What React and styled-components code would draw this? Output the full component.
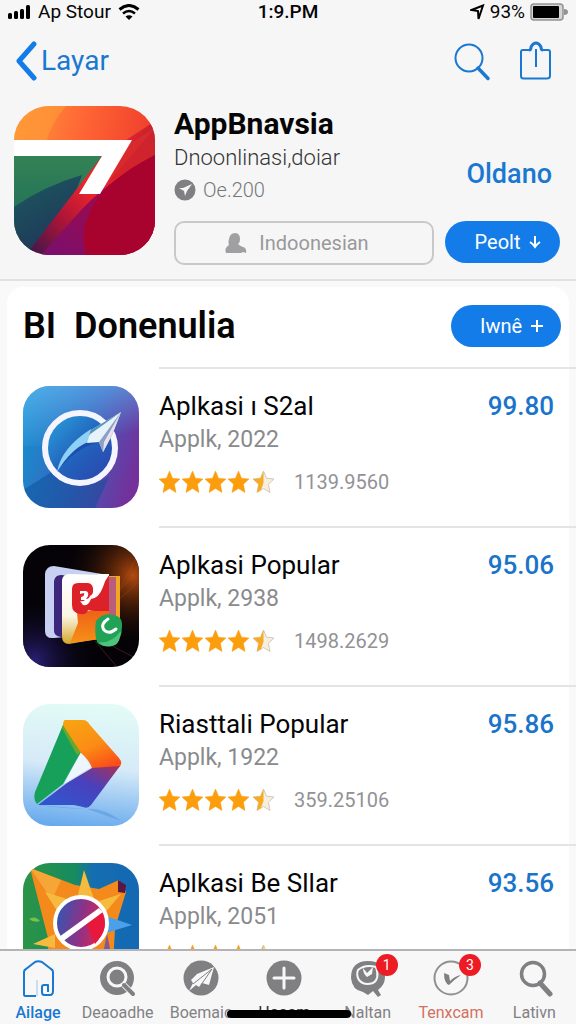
import React from 'react';
import styled, { createGlobalStyle } from 'styled-components';

const GlobalStyle = createGlobalStyle`
  * {
    box-sizing: border-box;
  }

  body {
    margin: 0;
    background: #f6f6f7;
    font-family: Roboto, "Liberation Sans", sans-serif;
    color: #050505;
  }

  button {
    font-family: inherit;
    border: none;
    padding: 0;
    background: none;
    cursor: pointer;
  }

  h1, h2, h3, p, ul {
    margin: 0;
    padding: 0;
  }

  svg {
    display: block;
    flex: none;
  }
`;

const Screen = styled.div`
  height: 100vh;
  display: flex;
  flex-direction: column;
  overflow: hidden;
`;

const StatusBar = styled.div`
  display: grid;
  grid-template-columns: 1fr auto 1fr;
  align-items: center;
  height: 24px;
  padding: 0 8px;
  font-size: 19px;
  line-height: 24px;
`;

const StatusGroup = styled.div`
  display: flex;
  align-items: center;
  justify-content: ${props => (props.$end ? 'flex-end' : 'flex-start')};
  gap: ${props => (props.$end ? '5px' : '7px')};
`;

const Clock = styled.span`
  font-weight: 500;
`;

const NavBar = styled.nav`
  display: flex;
  align-items: center;
  justify-content: space-between;
  height: 76px;
  padding: 0 23px 2px 15px;
`;

const BackLink = styled.a`
  display: flex;
  align-items: center;
  gap: 4px;
  font-size: 28px;
  line-height: 36px;
  color: #1a78d2;
  text-decoration: none;
`;

const NavActions = styled.div`
  display: flex;
  align-items: center;
  gap: 28px;
`;

const IconButton = styled.button`
  display: flex;
`;

const AppHeader = styled.header`
  display: flex;
  align-items: flex-start;
  gap: 19px;
  padding: 6px 16px 14px 14px;
  border-bottom: 2px solid #e1e1e2;
`;

const AppInfo = styled.div`
  flex: 1;
  display: flex;
  flex-direction: column;
  gap: 15px;
`;

const InfoTop = styled.div`
  display: flex;
  align-items: flex-end;
  justify-content: space-between;
`;

const AppTitle = styled.h1`
  font-size: 30px;
  line-height: 36px;
  font-weight: 700;
`;

const AppSubtitle = styled.p`
  font-size: 22px;
  line-height: 32px;
  font-weight: 300;
  color: #333;
`;

const AppMeta = styled.p`
  display: flex;
  align-items: center;
  gap: 7px;
  font-size: 20px;
  line-height: 32px;
  font-weight: 300;
  color: #77777a;
`;

const PriceLink = styled.a`
  padding: 0 8px 14px 0;
  font-size: 27px;
  line-height: 36px;
  font-weight: 500;
  color: #1a78d2;
  text-decoration: none;
`;

const InfoActions = styled.div`
  display: flex;
  gap: 11px;
`;

const OutlineButton = styled.button`
  flex: 1;
  display: flex;
  align-items: center;
  justify-content: center;
  gap: 12px;
  height: 44px;
  border: 2px solid #c9c9ca;
  border-radius: 10px;
  padding-right: 14px;
  font-size: 20px;
  color: #99999b;
`;

const PillButton = styled.button`
  display: flex;
  align-items: center;
  justify-content: center;
  gap: 8px;
  width: ${props => (props.$small ? '110px' : '115px')};
  height: 42px;
  padding-left: 12px;
  border-radius: 21px;
  background: #147ce8;
  color: #fff;
  font-size: 20px;
`;

const Content = styled.main`
  flex: 1;
  min-height: 0;
  overflow: hidden;
  padding: 6px 0 0 7px;
  background: #f9f9fa;
`;

const ListHeader = styled.div`
  display: flex;
  align-items: center;
  justify-content: space-between;
  height: 80px;
  margin-right: 7px;
  padding: 0 8px 2px 16px;
  border-radius: 16px 16px 0 0;
  background: #fff;
`;

const ListTitle = styled.h2`
  font-size: 36px;
  line-height: 42px;
  font-weight: 600;
  white-space: pre;
`;

const AppList = styled.ul`
  list-style: none;
  background: linear-gradient(to left, #f9f9fa 7px, #fff 7px);
`;

const AppRow = styled.li`
  display: flex;
  gap: 20px;
  padding-left: 16px;
`;

const IconCell = styled.div`
  padding-top: 19px;
`;

const RowBody = styled.div`
  flex: 1;
  height: 159px;
  padding: 22px 22px 0 0;
  border-top: 2px solid #e4e4e6;
`;

const RowTop = styled.div`
  display: flex;
  justify-content: space-between;
`;

const RowTitle = styled.h3`
  font-size: 26px;
  line-height: 30px;
  font-weight: 400;
`;

const RowPrice = styled.a`
  font-size: 26px;
  line-height: 30px;
  font-weight: 500;
  color: #1a74ca;
  text-decoration: none;
`;

const RowSubtitle = styled.p`
  margin-top: 4px;
  font-size: 23px;
  line-height: 30px;
  color: #8a8a8d;
`;

const Rating = styled.div`
  display: flex;
  align-items: center;
  gap: 20px;
  margin-top: 13px;
  font-size: 20px;
  line-height: 28px;
  color: #929295;
`;

const TabBar = styled.nav`
  position: relative;
  display: grid;
  grid-template-columns: 76px repeat(6, 1fr);
  height: 75px;
  border-top: 2px solid #b4b4b6;
  background: #f7f7f8;
`;

const Tab = styled.button`
  display: flex;
  flex-direction: column;
  align-items: center;
  padding-top: 9px;
  gap: 5px;
  font-size: 16px;
  line-height: 20px;
  font-weight: ${props => (props.$active ? 500 : 400)};
  color: ${props => props.$color || '#818183'};
`;

const TabIcon = styled.span`
  position: relative;
`;

const Badge = styled.span`
  position: absolute;
  top: -6px;
  right: -11px;
  width: 22px;
  height: 22px;
  border-radius: 50%;
  background: #ed1c24;
  color: #fff;
  font-size: 14px;
  line-height: 22px;
  text-align: center;
`;

const HomeIndicator = styled.div`
  position: absolute;
  left: 50%;
  bottom: 6px;
  width: 124px;
  height: 8px;
  margin-left: -61px;
  border-radius: 4px;
  background: #000;
`;

const STAR = 'M10.500 0l3 7.200 7.500.8-5.600 5.200L17 21.500l-6.500-4-6.500 4 1.600-8.300L0 8l7.500-.8z';

function Stars() {
  return (
    <svg width="115" height="22" viewBox="0 0 115 22" role="img" aria-label="4.5">
      {[0, 1, 2, 3].map(i => (
        <path key={i} d={STAR} fill="#fb9d0c" stroke="#fb9d0c" strokeWidth="0.5" strokeLinejoin="round" transform={`translate(${i * 23} 0)`} />
      ))}
      <g transform="translate(94 0)">
        <path d={STAR} fill="#f6efe0" stroke="#d5c9b4" strokeWidth="1" />
        <path d="M10.500 0v12L8 19l-4 2.500 1.600-8.300L0 8l7.500-.8z" fill="#f6ab25" />
      </g>
    </svg>
  );
}

function SevenIcon() {
  return (
    <svg width="141" height="149" viewBox="0 0 141 149" aria-hidden="true">
      <defs>
        <clipPath id="sevenClip"><rect width="141" height="149" rx="35" /></clipPath>
        <linearGradient id="sevenTop" x1="0" y1="0" x2="1" y2="0.2">
          <stop offset="0" stopColor="#ff9a3c" />
          <stop offset="0.5" stopColor="#ff6534" />
          <stop offset="1" stopColor="#ee3d2c" />
        </linearGradient>
        <linearGradient id="sevenGreen" x1="0" y1="0" x2="0" y2="1">
          <stop offset="0" stopColor="#348355" />
          <stop offset="1" stopColor="#17675a" />
        </linearGradient>
        <linearGradient id="sevenBlue" x1="0" y1="0" x2="0.5" y2="1">
          <stop offset="0" stopColor="#1b5b60" />
          <stop offset="1" stopColor="#203558" />
        </linearGradient>
        <linearGradient id="sevenRed" x1="1" y1="0" x2="0" y2="1">
          <stop offset="0" stopColor="#cf2330" />
          <stop offset="0.5" stopColor="#ee242c" />
          <stop offset="0.75" stopColor="#a31439" />
          <stop offset="1" stopColor="#35174e" />
        </linearGradient>
        <linearGradient id="sevenPurple" x1="1" y1="0" x2="0" y2="1">
          <stop offset="0" stopColor="#ba0534" />
          <stop offset="1" stopColor="#77106f" />
        </linearGradient>
      </defs>
      <g clipPath="url(#sevenClip)">
        <rect width="141" height="149" fill="url(#sevenTop)" />
        <path d="M0 0h52Q39 14 32 36H0z" fill="#ff9836" opacity="0.7" />
        <path d="M0 48h92L62 98 15 149H0z" fill="url(#sevenGreen)" />
        <path d="M0 101Q30 80 68 69L54 108 15 149H0z" fill="url(#sevenBlue)" />
        <path d="M141 15 88 50 12 149h129z" fill="url(#sevenRed)" />
        <path d="M141 22 86 86l22-44z" fill="#ff3b31" opacity="0.55" />
        <path d="M118 35 141 15v34L92 78z" fill="#c4232c" opacity="0.5" />
        <path d="M141 49Q91 76 61 111L27 149h114z" fill="url(#sevenPurple)" />
        <path d="M141 49Q91 74 77 104 65 126 72 149h69z" fill="#a8032f" />
        <path d="M0 34h118L86 88H65L88 50H0z" fill="#fff" />
      </g>
    </svg>
  );
}

function PlaneIcon() {
  return (
    <svg width="116" height="122" viewBox="0 0 116 122" aria-hidden="true">
      <defs>
        <clipPath id="planeClip"><rect width="116" height="122" rx="27" /></clipPath>
        <linearGradient id="planeBg" x1="0" y1="0.3" x2="1" y2="0.6">
          <stop offset="0" stopColor="#168fcf" />
          <stop offset="0.5" stopColor="#3a63bd" />
          <stop offset="1" stopColor="#74309b" />
        </linearGradient>
        <linearGradient id="planeTop" x1="0" y1="0" x2="0.4" y2="1">
          <stop offset="0" stopColor="#62b2ee" stopOpacity="0.8" />
          <stop offset="1" stopColor="#62b2ee" stopOpacity="0" />
        </linearGradient>
        <linearGradient id="planeDisc" x1="0" y1="0" x2="1" y2="1">
          <stop offset="0" stopColor="#2ca6e0" />
          <stop offset="0.5" stopColor="#2164bd" />
          <stop offset="1" stopColor="#2c41aa" />
        </linearGradient>
      </defs>
      <g clipPath="url(#planeClip)">
        <rect width="116" height="122" fill="url(#planeBg)" />
        <rect width="116" height="60" fill="url(#planeTop)" />
        <path d="M0 104 32 84q25 22 54 7l-14 31H0z" fill="#0c4e97" opacity="0.5" />
        <circle cx="57" cy="62" r="35" fill="url(#planeDisc)" stroke="#f4f5ff" strokeWidth="6" />
        <path d="M34 86Q38 62 68 43l-3 14Q49 65 34 86z" fill="#8ed1f5" />
        <path d="M34 86Q48 63 65 56l9 1Q52 62 34 86z" fill="#1d4dac" />
        <path d="M98 26 68 44l-4 13 12-1 4 10 9-17z" fill="#e8f2fa" />
        <path d="M98 26 76 56l4 10 9-17z" fill="#8c9fc4" />
        <path d="M98 26 68 44l-2 5z" fill="#5295bd" />
        <path d="m98 26-17 30-1 10 9-17z" fill="#e9dfee" />
      </g>
    </svg>
  );
}

function BooksIcon() {
  return (
    <svg width="116" height="122" viewBox="0 0 116 122" aria-hidden="true">
      <defs>
        <clipPath id="booksClip"><rect width="116" height="122" rx="27" /></clipPath>
        <radialGradient id="booksGlow" cx="0.95" cy="0.25" r="0.6">
          <stop offset="0" stopColor="#b44b10" />
          <stop offset="1" stopColor="#000" stopOpacity="0" />
        </radialGradient>
        <radialGradient id="booksNight" cx="0.1" cy="0.95" r="0.55">
          <stop offset="0" stopColor="#2a1f75" />
          <stop offset="1" stopColor="#000" stopOpacity="0" />
        </radialGradient>
        <linearGradient id="booksPage" x1="0" y1="0" x2="0" y2="1">
          <stop offset="0" stopColor="#fff" />
          <stop offset="0.6" stopColor="#fbf5e4" />
          <stop offset="1" stopColor="#d5a629" />
        </linearGradient>
        <linearGradient id="booksOrange" x1="0" y1="0" x2="0" y2="1">
          <stop offset="0" stopColor="#ef5b18" />
          <stop offset="1" stopColor="#f69118" />
        </linearGradient>
      </defs>
      <g clipPath="url(#booksClip)">
        <rect width="116" height="122" fill="#050308" />
        <rect width="116" height="122" fill="url(#booksGlow)" />
        <rect width="116" height="122" fill="url(#booksNight)" />
        <path d="M88 60 116 8M88 58l28-38M90 60l26-24M72 96l22 26M80 96l34 18" stroke="#a55220" strokeWidth="1" opacity="0.35" />
        <path d="M22 29q1-8 9-8l54 9v58l-54 5q-9 1-9-7z" fill="#c7cff2" />
        <path d="M31 36q1-6 7-6l14 1v65l-14-4q-7-1-7-6z" fill="#3c267b" />
        <path d="M85 31h12v60H85z" fill="#f2a623" />
        <path d="M84 32h9v58h-9z" fill="#b85e7c" />
        <path d="M39 35q1-6 7-6l40 1v62l-40 7q-7 0-7-8z" fill="url(#booksPage)" />
        <path d="M54 68 86 62v31l-39 5 8-20z" fill="url(#booksOrange)" />
        <path d="M49 44q0-6 6-6h9q5 0 6 5v7l16-20v36H72l-7-1q-1 5-8 4-8-1-8-9z" fill="#dc2129" />
        <path d="M57 46h6q3 1 2 5l-2 3q3 0 4-3l4-3-4 8q-2 5-7 4l-3-4q3 1 5-1h-4v-3q4-1 3-4l-4 1z" fill="#fff" />
        <path d="M86 29H75l-7 25q8-1 12-12 2-7 6-12z" fill="#fff" />
        <path d="M73 76q7-9 17-6 10 1 9 12 0 12-8 16-12 6-17-1-3-10-1-21z" fill="#20a357" />
        <path d="M76 97q12 2 22-11-1 14-9 15-9 2-13-4z" fill="#4ec47a" />
        <path d="M85 74q-8 5-4 11 5 5 12-1" fill="none" stroke="#fff" strokeWidth="3" strokeLinecap="round" />
      </g>
    </svg>
  );
}

function DriveIcon() {
  return (
    <svg width="116" height="122" viewBox="0 0 116 122" aria-hidden="true">
      <defs>
        <clipPath id="driveClip"><rect width="116" height="122" rx="27" /></clipPath>
        <linearGradient id="driveBg" x1="0.5" y1="0" x2="0.4" y2="1">
          <stop offset="0" stopColor="#e2fbf6" />
          <stop offset="0.5" stopColor="#d6eaf8" />
          <stop offset="1" stopColor="#67aaed" />
        </linearGradient>
        <linearGradient id="driveOrange" x1="0.2" y1="0" x2="0.7" y2="1">
          <stop offset="0" stopColor="#f7a312" />
          <stop offset="0.55" stopColor="#fb8c15" />
          <stop offset="1" stopColor="#fb4d18" />
        </linearGradient>
        <linearGradient id="driveBlue" x1="0" y1="1" x2="1" y2="0">
          <stop offset="0" stopColor="#2a5bd0" />
          <stop offset="0.6" stopColor="#4a40bd" />
          <stop offset="1" stopColor="#a93059" />
        </linearGradient>
      </defs>
      <g clipPath="url(#driveClip)">
        <rect width="116" height="122" fill="url(#driveBg)" />
        <path d="M14 101q30 4 50 4l34 12q-18-14-35-12z" fill="#498bd4" opacity="0.4" />
        <path d="M58 48 41 80l27-17z" fill="#eef6fd" />
        <path d="M42 16Q30 45 12 88q-2 8 2 12L40 80l18-32z" fill="#17a05a" />
        <path d="m41 20 17 28-4 3-15-27z" fill="#6aa82c" />
        <path d="M42 16h18q4 0 7 5l29 33q5 6-1 10l-26 1Q68 58 58 49L40 21q0-4 2-5z" fill="url(#driveOrange)" />
        <path d="M69 64 97 62 68 101q-3 4-8 2l-9-2H15L44 79z" fill="url(#driveBlue)" />
      </g>
    </svg>
  );
}

function CompassIcon() {
  return (
    <svg width="116" height="122" viewBox="0 0 116 122" aria-hidden="true">
      <defs>
        <clipPath id="compassClip"><rect width="116" height="122" rx="27" /></clipPath>
        <linearGradient id="compassBg" x1="0" y1="0" x2="1" y2="0">
          <stop offset="0" stopColor="#2c9445" />
          <stop offset="0.45" stopColor="#178b60" />
          <stop offset="0.6" stopColor="#156eb0" />
          <stop offset="1" stopColor="#1468b4" />
        </linearGradient>
        <linearGradient id="compassDial" x1="0" y1="0.4" x2="1" y2="0.6">
          <stop offset="0" stopColor="#3157b4" />
          <stop offset="0.5" stopColor="#8c3287" />
          <stop offset="1" stopColor="#ee2448" />
        </linearGradient>
      </defs>
      <g clipPath="url(#compassClip)">
        <rect width="116" height="122" fill="url(#compassBg)" />
        <path d="M7 5 52 22l24 4 20-9 7 12-11 36-3 57H25V75z" fill="#f48a1c" />
        <path d="m7 5 31 12-9 20z" fill="#f6a637" />
        <path d="m95 17 8 5-1 8-7-1z" fill="#5a1743" />
        <path d="m61 7 10 29H54zM22 29l25 8-11 14zM98 31 80 52 70 40zM10 81l22-10v14z" fill="#f6bb3e" />
        <path d="m83 53 26 9-26 8z" fill="#4ba0ea" />
        <path d="M6 56q6-4 11 2-6 2-11-2z" fill="#79c04d" />
        <path d="m84 70 10 52H74z" fill="#684bb4" opacity="0.8" />
        <circle cx="58" cy="60" r="26" fill="url(#compassDial)" stroke="#fff" strokeWidth="4" />
        <path d="m63 60 15-11q10 14-6 32z" fill="#e8173c" />
        <path d="m36 74 40-29 4 4-41 30z" fill="#fff" />
      </g>
    </svg>
  );
}

function SearchTabIcon() {
  return (
    <svg width="38" height="38" viewBox="0 0 38 38" aria-hidden="true">
      <circle cx="18" cy="18" r="17" fill="#808083" />
      <circle cx="18" cy="17" r="9" fill="none" stroke="#f7f7f8" strokeWidth="3" />
      <path d="m25 25 9 9" stroke="#f7f7f8" strokeWidth="6" />
      <path d="m25 25 9 9" stroke="#808083" strokeWidth="4" strokeLinecap="round" />
    </svg>
  );
}

const apps = [
  { title: 'Aplkasi ı S2al', subtitle: 'Applk, 2022', count: '1139.9560', price: '99.80', icon: PlaneIcon },
  { title: 'Aplkasi Popular', subtitle: 'Applk, 2938', count: '1498.2629', price: '95.06', icon: BooksIcon },
  { title: 'Riasttali Popular', subtitle: 'Applk, 1922', count: '359.25106', price: '95.86', icon: DriveIcon },
  { title: 'Aplkasi Be Sllar', subtitle: 'Applk, 2051', price: '93.56', icon: CompassIcon }
];

const tabs = [
  {
    label: 'Ailage',
    color: '#1a78d2',
    active: true,
    icon: (
      <svg width="38" height="38" viewBox="0 0 38 38" fill="none" stroke="#1a78d2" strokeWidth="2" strokeLinejoin="round" aria-hidden="true">
        <path d="M17 36H6q-1 0-1-2V12q0-2 2-3l9-7q3-1.500 7 0l9 7q2 1 2 3v19q0 4-3 4h-6q-2 0-2-3v-5q0-2 2-2h4v7" />
        <path d="M18 20v16" strokeWidth="1" opacity="0.4" />
      </svg>
    )
  },
  { label: 'Deaoadhe', icon: <SearchTabIcon /> },
  {
    label: 'Boemaic',
    icon: (
      <svg width="38" height="38" viewBox="0 0 38 38" aria-hidden="true">
        <circle cx="19" cy="18" r="17.500" fill="#808083" />
        <path d="M32 7 15 14l-6 6 2 3-4 8 7-6 3 2 3-4 7 2z" fill="#f7f7f8" />
        <path d="M30 9 11 24M30 9 19 25" stroke="#808083" strokeWidth="1" />
      </svg>
    )
  },
  {
    label: 'Hoaam',
    color: '#2c2c2e',
    icon: (
      <svg width="38" height="38" viewBox="0 0 38 38" aria-hidden="true">
        <circle cx="19" cy="18" r="17.500" fill="#808083" />
        <path d="M19 8v20M9 18h20" stroke="#f7f7f8" strokeWidth="3" strokeLinecap="round" />
      </svg>
    )
  },
  {
    label: 'Naltan',
    badge: '1',
    icon: (
      <svg width="38" height="38" viewBox="0 0 38 38" aria-hidden="true">
        <path d="M19 1q17 0 17 16 0 8-7 13l3 5-3 2-5-6-5 4-5-3Q3 30 2 18 2 1 19 1z" fill="#808083" />
        <path d="M9 10q7-6 18-3 4 12-3 16-9 3-14-3-3-5-1-10z" fill="none" stroke="#f7f7f8" strokeWidth="2" strokeLinejoin="round" />
        <path d="m14 8 4 5 6-6-1 7-5 3q-4-3-4-9z" fill="#f7f7f8" />
      </svg>
    )
  },
  {
    label: 'Tenxcam',
    color: '#d0715f',
    badge: '3',
    icon: (
      <svg width="38" height="38" viewBox="0 0 38 38" aria-hidden="true">
        <circle cx="19" cy="18" r="16.500" fill="none" stroke="#909093" strokeWidth="2" />
        <path d="m12 13 5 2 1 6q5-5 11-6-6 4-12 10-5-2-5-12z" fill="#808083" />
      </svg>
    )
  },
  {
    label: 'Lativn',
    icon: (
      <svg width="38" height="38" viewBox="0 0 38 38" fill="none" stroke="#808083" aria-hidden="true">
        <circle cx="18" cy="14" r="11.500" strokeWidth="3.500" />
        <path d="m25 23 10 11" strokeWidth="5" strokeLinecap="round" />
      </svg>
    )
  }
];

function App() {
  return (
    <Screen>
      <GlobalStyle />
      <StatusBar>
        <StatusGroup>
          <svg width="23" height="14" viewBox="0 0 23 14" aria-hidden="true">
            <rect x="0" y="8" width="4" height="6" rx="1.500" />
            <rect x="6" y="6" width="4" height="8" rx="1.500" />
            <rect x="12" y="4" width="4" height="10" rx="1.500" />
            <rect x="18" y="0" width="4" height="14" rx="1.500" />
          </svg>
          <span>Ap Stour</span>
          <svg width="22" height="17" viewBox="0 0 22 17" fill="none" stroke="#000" aria-hidden="true">
            <path d="M1.500 5.500Q11-2.500 20.500 5.500" strokeWidth="3" />
            <path d="M5 9.500q6-5 12 0" strokeWidth="2.500" />
            <path d="m7.500 12.500q3.500-2.500 7 0L11 16z" fill="#000" stroke="none" />
          </svg>
        </StatusGroup>
        <Clock>1:9.PM</Clock>
        <StatusGroup $end>
          <svg width="15" height="17" viewBox="0 0 15 17" fill="none" stroke="#000" strokeWidth="2" aria-hidden="true">
            <path d="M1.500 6 13 1.500 8.500 15 8 7z" />
          </svg>
          <span>93%</span>
          <svg width="38" height="18" viewBox="0 0 38 18" aria-hidden="true">
            <rect x="1" y="1" width="32" height="16" rx="3" fill="#d5d5d6" stroke="#929294" strokeWidth="1.500" />
            <rect x="3" y="3" width="26" height="12" rx="1" fill="#000" />
            <path d="M34 6q4 0 4 3t-4 3z" fill="#929294" />
          </svg>
        </StatusGroup>
      </StatusBar>

      <NavBar>
        <BackLink href="#layar">
          <svg width="22" height="40" viewBox="0 0 22 40" aria-hidden="true">
            <path d="M19 3 4 20l15 17" fill="none" stroke="#147ce8" strokeWidth="5" strokeLinecap="round" strokeLinejoin="round" />
          </svg>
          Layar
        </BackLink>
        <NavActions>
          <IconButton aria-label="Search">
            <svg width="38" height="40" viewBox="0 0 38 40" fill="none" stroke="#1a78d2" aria-hidden="true">
              <circle cx="16" cy="17" r="13.500" strokeWidth="2" />
              <path d="m25 27 10 10.500" strokeWidth="3.500" strokeLinecap="round" />
            </svg>
          </IconButton>
          <IconButton aria-label="Share">
            <svg width="34" height="40" viewBox="0 0 34 40" fill="none" stroke="#1a78d2" strokeWidth="2" strokeLinejoin="round" aria-hidden="true">
              <path d="M11 9H4q-2 0-2 2v24q0 2.500 2.500 2.500h23Q31 37.500 31 35V11q0-2-2-2h-6" />
              <path d="M10 9q2 0 2-3 2-4 5-4t5 4q0 3 2 3" strokeWidth="3" />
              <path d="M17 8v18" />
            </svg>
          </IconButton>
        </NavActions>
      </NavBar>

      <AppHeader>
        <SevenIcon />
        <AppInfo>
          <InfoTop>
            <div>
              <AppTitle>AppBnavsia</AppTitle>
              <AppSubtitle>Dnoonlinasi,doiar</AppSubtitle>
              <AppMeta>
                <svg width="22" height="22" viewBox="0 0 22 22" aria-hidden="true">
                  <circle cx="11" cy="11" r="10.500" fill="#808083" />
                  <path d="M18 5 9 9 5 9l5 3 1 5 2-5z" fill="#f6f6f7" />
                </svg>
                Oe.200
              </AppMeta>
            </div>
            <PriceLink href="#oldano">Oldano</PriceLink>
          </InfoTop>
          <InfoActions>
            <OutlineButton>
              <svg width="22" height="22" viewBox="0 0 22 22" aria-hidden="true">
                <path d="M4 7q1-6 6-6t5 6q0 4-2 5 2 2 5 3 4 1 3 6l-3-1-2 1H1q-2-5 3-8-1-3 0-6z" fill="#a0a0a2" />
              </svg>
              Indoonesian
            </OutlineButton>
            <PillButton>
              Peolt
              <svg width="14" height="14" viewBox="0 0 14 14" fill="none" stroke="#fff" strokeWidth="2" aria-hidden="true">
                <path d="M7 1v10M2 7q3 2 5 5 2-3 5-5" />
              </svg>
            </PillButton>
          </InfoActions>
        </AppInfo>
      </AppHeader>

      <Content>
        <ListHeader>
          <ListTitle>{'BI  Donenulia'}</ListTitle>
          <PillButton $small>
            Iwnê
            <svg width="14" height="14" viewBox="0 0 14 14" fill="none" stroke="#fff" strokeWidth="2" aria-hidden="true">
              <path d="M7 1v12M1 7h12" />
            </svg>
          </PillButton>
        </ListHeader>
        <AppList>
          {apps.map(app => (
            <AppRow key={app.title}>
              <IconCell>
                <app.icon />
              </IconCell>
              <RowBody>
                <RowTop>
                  <RowTitle>{app.title}</RowTitle>
                  <RowPrice href="#price">{app.price}</RowPrice>
                </RowTop>
                <RowSubtitle>{app.subtitle}</RowSubtitle>
                <Rating>
                  <Stars />
                  {app.count}
                </Rating>
              </RowBody>
            </AppRow>
          ))}
        </AppList>
      </Content>

      <TabBar>
        {tabs.map(tab => (
          <Tab key={tab.label} $color={tab.color} $active={tab.active}>
            <TabIcon>
              {tab.icon}
              {tab.badge && <Badge>{tab.badge}</Badge>}
            </TabIcon>
            {tab.label}
          </Tab>
        ))}
        <HomeIndicator />
      </TabBar>
    </Screen>
  );
}

export default App;
